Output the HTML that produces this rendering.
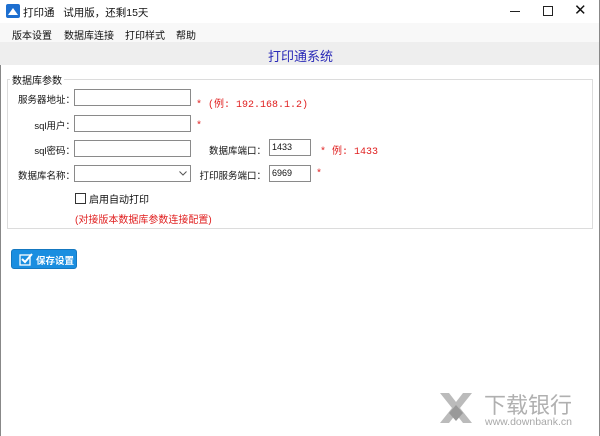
<!DOCTYPE html>
<html><head><meta charset="utf-8"><style>
body{margin:0;width:600px;height:436px;overflow:hidden;background:#fff;font-family:"Liberation Sans","Noto Sans CJK SC",sans-serif;font-size:10px;color:#111;position:relative}
.a{position:absolute;white-space:nowrap}
.in{position:absolute;border:1px solid #8a8a8a;background:#fff;height:17px;box-sizing:border-box}
.red{color:#e02020;font-size:10px;font-family:"Liberation Mono","Noto Sans CJK SC",monospace}
.l{font-size:9.5px;text-align:right}
</style></head><body>
<div class="a" style="left:0;top:0;width:600px;height:23px;background:#fff"></div>
<svg class="a" style="left:6px;top:4px" width="14" height="14"><rect width="14" height="14" rx="2" fill="#1e6fd0"/><path d="M2 11 L7 4 L12 11 Z" fill="#fff"/></svg>
<div class="a" style="left:23px;top:5px;font-size:10.5px">打印通&nbsp;&nbsp;&nbsp;试用版，还剩15天</div>
<div class="a" style="left:510px;top:11px;width:10px;height:1px;background:#222"></div>
<div class="a" style="left:543px;top:6px;width:8px;height:8px;border:1px solid #222"></div>
<div class="a" style="left:574px;top:1px;font-size:15px">✕</div>
<div class="a" style="left:0;top:23px;width:600px;height:19px;background:#f8f8f8"></div>
<div class="a" style="left:12px;top:27px">版本设置</div>
<div class="a" style="left:64px;top:27px">数据库连接</div>
<div class="a" style="left:125px;top:27px">打印样式</div>
<div class="a" style="left:176px;top:27px">帮助</div>
<div class="a" style="left:0;top:42px;width:600px;height:23px;background:#eeeeee"></div>
<div class="a" style="left:268px;top:46px;font-size:13px;color:#2a2ab8">打印通系统</div>
<div class="a" style="left:0;top:65px;width:1px;height:371px;background:#888"></div>
<div class="a" style="left:599px;top:0;width:1px;height:436px;background:#888"></div>
<div class="a" style="left:7px;top:79px;width:586px;height:150px;border:1px solid #dcdcdc;box-sizing:border-box"></div>
<div class="a" style="left:10px;top:72px;background:#fff;padding:0 2px">数据库参数</div>
<div class="a l" style="left:10px;width:65px;top:92px">服务器地址：</div>
<div class="in" style="left:74px;top:89px;width:117px"></div>
<div class="a red" style="left:196px;top:95px">* (例: 192.168.1.2)</div>
<div class="a l" style="left:10px;width:65px;top:118px">sql用户：</div>
<div class="in" style="left:74px;top:115px;width:117px"></div>
<div class="a red" style="left:196px;top:121px">*</div>
<div class="a l" style="left:10px;width:65px;top:143px">sql密码：</div>
<div class="in" style="left:74px;top:140px;width:117px"></div>
<div class="a l" style="left:200px;width:66px;top:143px">数据库端口：</div>
<div class="in" style="left:269px;top:139px;width:42px;font-size:9px;padding:2px 2px">1433</div>
<div class="a red" style="left:320px;top:142px">* 例: 1433</div>
<div class="a l" style="left:10px;width:65px;top:168px">数据库名称：</div>
<div class="in" style="left:74px;top:165px;width:117px"></div>
<svg class="a" style="left:179px;top:171px" width="8" height="5"><path d="M0.5 0.5 L4 4 L7.5 0.5" fill="none" stroke="#555"/></svg>
<div class="a l" style="left:190px;width:76px;top:168px">打印服务端口：</div>
<div class="in" style="left:269px;top:165px;width:42px;font-size:9px;padding:2px 2px">6969</div>
<div class="a red" style="left:316px;top:169px">*</div>
<div class="a" style="left:75px;top:193px;width:9px;height:9px;border:1px solid #333"></div>
<div class="a" style="left:89px;top:191px">启用自动打印</div>
<div class="a red" style="left:75px;top:211px;font-family:'Liberation Sans','Noto Sans CJK SC',sans-serif;font-size:10px">(对接版本数据库参数连接配置)</div>
<div class="a" style="left:11px;top:249px;width:66px;height:20px;background:#1a8ee0;border-radius:3px;border:1px solid #1578c0;box-sizing:border-box"></div>
<svg class="a" style="left:19px;top:252px" width="14" height="14"><rect x="1" y="3" width="10" height="10" fill="none" stroke="#fff" stroke-width="1.3"/><path d="M3 7 L6 10 L13 2" fill="none" stroke="#fff" stroke-width="2"/></svg>
<div class="a" style="left:36px;top:253px;font-size:9.5px;color:#fff;font-weight:bold">保存设置</div>
<svg class="a" style="left:437px;top:391px" width="38" height="34"><path d="M3 2 L12 2 L19 11 L26 2 L35 2 L23 17 L35 32 L26 32 L19 23 L12 32 L3 32 L15 17 Z" fill="#bbb"/><path d="M12 22 L19 14 L26 22 L19 30Z" fill="#999"/></svg>
<div class="a" style="left:484px;top:388px;font-size:22px;color:#b0b0b0">下载银行</div>
<div class="a" style="left:485px;top:416px;font-size:10.5px;color:#a8a8a8">www.downbank.cn</div>
</body></html>
